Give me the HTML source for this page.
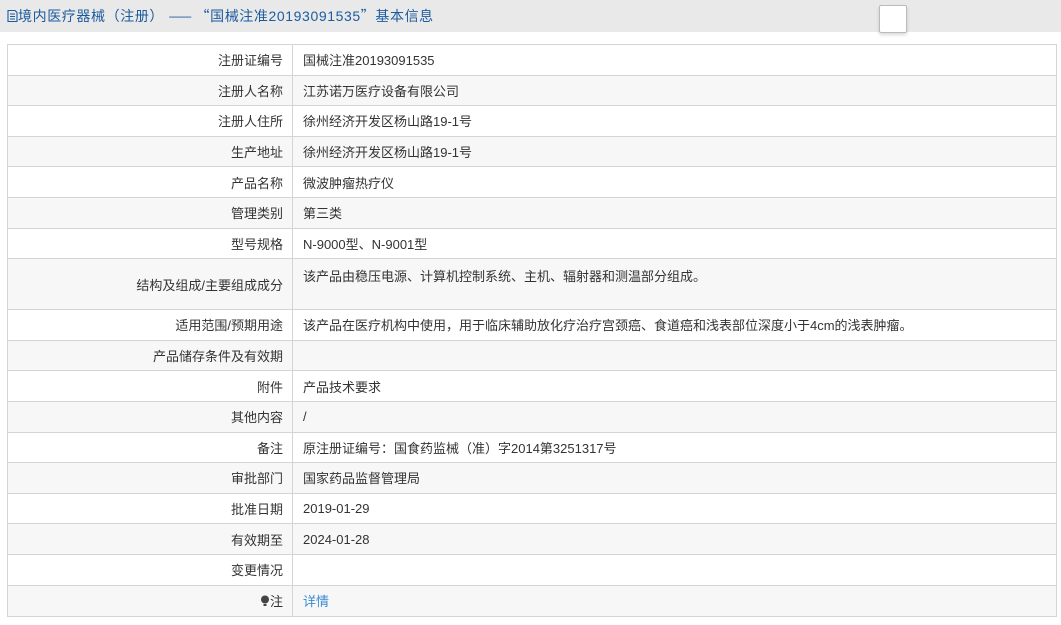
<!DOCTYPE html>
<html><head><meta charset="utf-8"><style>
body{margin:0;width:1061px;height:625px;background:#fff;font-family:"Liberation Sans","Noto Sans CJK SC",sans-serif;font-size:13px;color:#333;overflow:hidden;position:relative}
.hd{position:absolute;left:0;top:0;width:1061px;height:32px;background:#e9e9e9;color:#1c5b9e;font-size:14px;line-height:33px;padding-left:7px;box-sizing:border-box;white-space:nowrap;letter-spacing:0.6px}
.cj{font-family:"Noto Sans CJK SC",sans-serif}
.box{position:absolute;left:879px;top:5px;width:26px;height:26px;background:#fff;border:1px solid #bbb;border-radius:2px;box-shadow:0 2px 3px rgba(0,0,0,.15)}
table{position:absolute;left:7px;top:44px;width:1050px;border-collapse:collapse}
td{border:1px solid #d4d4d4;height:30.6px;padding:0 10px;box-sizing:border-box}
td.l{width:285px;text-align:right;padding-right:9px}
tr:nth-child(even) td{background:#f7f7f7}
tr.t td{height:51px}
tr.t td.v{vertical-align:top;padding-top:7px}
a{color:#3a8ad6;text-decoration:none}
</style></head><body>
<div class="hd"><svg width="11" height="12" viewBox="0 0 11 12" style="vertical-align:-1px"><path d="M1 .5h7l2 2v9H1z M3 4h5M3 6.5h5M3 9h5" fill="none" stroke="#1c5b9e" stroke-width="1.1"/></svg>境内医疗器械<span class="cj">（</span>注册<span class="cj">）</span> <span class="cj" style="letter-spacing:-1px">——</span> <span class="cj">“</span>国械注准20193091535<span class="cj">”</span>基本信息</div>
<div class="box"></div>
<table>
<tr><td class="l">注册证编号</td><td>国械注准20193091535</td></tr>
<tr><td class="l">注册人名称</td><td>江苏诺万医疗设备有限公司</td></tr>
<tr><td class="l">注册人住所</td><td>徐州经济开发区杨山路19-1号</td></tr>
<tr><td class="l">生产地址</td><td>徐州经济开发区杨山路19-1号</td></tr>
<tr><td class="l">产品名称</td><td>微波肿瘤热疗仪</td></tr>
<tr><td class="l">管理类别</td><td>第三类</td></tr>
<tr><td class="l">型号规格</td><td>N-9000型、N-9001型</td></tr>
<tr class="t"><td class="l">结构及组成/主要组成成分</td><td class="v">该产品由稳压电源、计算机控制系统、主机、辐射器和测温部分组成。</td></tr>
<tr><td class="l">适用范围/预期用途</td><td>该产品在医疗机构中使用，用于临床辅助放化疗治疗宫颈癌、食道癌和浅表部位深度小于4cm的浅表肿瘤。</td></tr>
<tr><td class="l">产品储存条件及有效期</td><td></td></tr>
<tr><td class="l">附件</td><td>产品技术要求</td></tr>
<tr><td class="l">其他内容</td><td>/</td></tr>
<tr><td class="l">备注</td><td>原注册证编号：国食药监械（准）字2014第3251317号</td></tr>
<tr><td class="l">审批部门</td><td>国家药品监督管理局</td></tr>
<tr><td class="l">批准日期</td><td>2019-01-29</td></tr>
<tr><td class="l">有效期至</td><td>2024-01-28</td></tr>
<tr><td class="l">变更情况</td><td></td></tr>
<tr><td class="l" style="height:31px"><svg width="10" height="12" viewBox="0 0 10 12" style="vertical-align:-1px"><circle cx="5" cy="4.5" r="4" fill="#444"/><rect x="3.5" y="9" width="3" height="2" fill="#444"/></svg>注</td><td><a>详情</a></td></tr>
</table>
</body></html>
